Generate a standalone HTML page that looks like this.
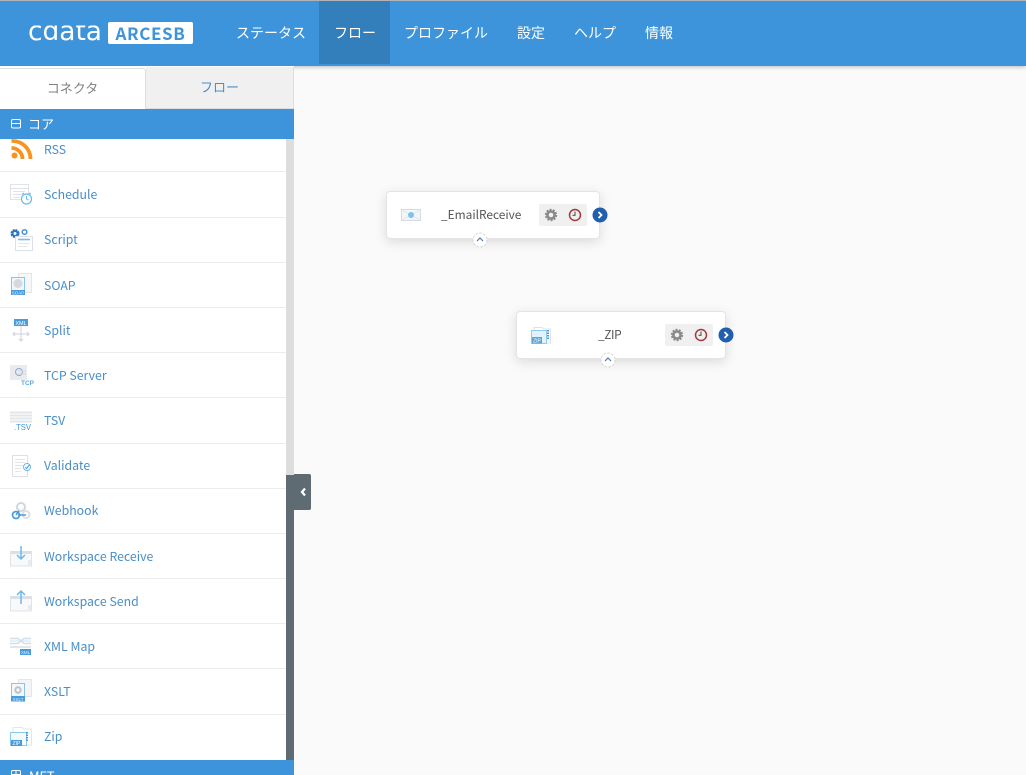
<!DOCTYPE html>
<html lang="ja"><head><meta charset="utf-8"><title>ArcESB</title>
<style>
html,body{margin:0;padding:0;width:1026px;height:775px;overflow:hidden;background:#fafafa;font-family:"Noto Sans CJK JP","Liberation Sans",sans-serif}
div,span{position:absolute;box-sizing:border-box}
#top{left:0;top:0;width:1026px;height:66px;background:#3e94da;border-top:1px solid #b0b4b8;box-shadow:0 1px 4px rgba(0,0,0,.25)}
#act{left:319px;top:1px;width:71px;height:63px;background:#337fbb}
.n{top:23px;height:20px;line-height:20px;font-size:14px;color:#fff;white-space:nowrap}
#badge{left:108px;top:22px;width:85px;height:22px;background:#fff;border-radius:2px;color:#3e94da;font:700 17px/22px "Noto Sans CJK JP",sans-serif;text-align:center;letter-spacing:.6px}
#side{left:0;top:66px;width:294px;height:709px;background:#fff}
#t1{left:0;top:68px;width:146px;height:42px;background:#fff;border:1px solid #ddd;border-bottom:0;border-left:0;border-radius:0 3px 0 0;text-align:center;line-height:38px;font-size:13px;color:#808080}
#t2{left:146px;top:67px;width:148px;height:42px;background:#f0f0f0;border-right:1px solid #ddd;border-bottom:1px solid #ddd;text-align:center;line-height:40px;font-size:13px;color:#4a8ec8}
.h{left:0;width:294px;background:#3e94da;color:#fff;font-size:13px;overflow:hidden}
.r{left:44px;height:20px;line-height:20px;font-size:12.3px;color:#4a8ec8;white-space:nowrap}
.l{left:0;width:286px;height:1px;background:#ececec}
#sb1{left:286px;top:139px;width:8px;height:336px;background:#ddd}
#sb2{left:286px;top:475px;width:8px;height:285px;background:#5f6b73}
#hd{left:294px;top:474px;width:17px;height:36px;background:#5f6b73;border-radius:0 2px 2px 0}
.node{background:#fff;border:1px solid #e4e4e4;border-radius:4px;box-shadow:0 3px 12px rgba(0,0,0,.13);height:48px}
.nt{height:20px;line-height:20px;font-size:11.9px;color:#555;white-space:nowrap}
.box{width:48px;height:22px;background:#f0f0f0;border-radius:2px}
svg{position:absolute;overflow:visible}
svg text{font-family:"Liberation Sans",sans-serif}
</style></head><body>

<div id="top"></div>
<div id="act"></div>
<svg style="left:0;top:0" width="110" height="66"><defs><clipPath id="lc"><rect x="20" y="25.500" width="90" height="20"/></clipPath></defs><text x="28" y="40" style="font-family:'DejaVu Sans',sans-serif" font-size="27" fill="#fff" textLength="74" lengthAdjust="spacingAndGlyphs" clip-path="url(#lc)">cdata</text></svg>
<div id="badge">ARCESB</div>
<span class="n" style="left:236px">ステータス</span>
<span class="n" style="left:334px">フロー</span>
<span class="n" style="left:404px">プロファイル</span>
<span class="n" style="left:517px">設定</span>
<span class="n" style="left:574px">ヘルプ</span>
<span class="n" style="left:645px">情報</span>

<div id="side"></div>
<div id="t2">フロー</div>
<div id="t1">コネクタ</div>

<div class="r" style="top:139px">RSS</div>
<div class="r" style="top:184px">Schedule</div>
<div class="r" style="top:229px">Script</div>
<div class="r" style="top:275px">SOAP</div>
<div class="r" style="top:320px">Split</div>
<div class="r" style="top:365px">TCP Server</div>
<div class="r" style="top:410px">TSV</div>
<div class="r" style="top:455px">Validate</div>
<div class="r" style="top:500px">Webhook</div>
<div class="r" style="top:546px">Workspace Receive</div>
<div class="r" style="top:591px">Workspace Send</div>
<div class="r" style="top:636px">XML Map</div>
<div class="r" style="top:681px">XSLT</div>
<div class="r" style="top:726px">Zip</div>

<div class="l" style="top:171px"></div><div class="l" style="top:217px"></div><div class="l" style="top:262px"></div><div class="l" style="top:307px"></div><div class="l" style="top:352px"></div><div class="l" style="top:397px"></div><div class="l" style="top:443px"></div><div class="l" style="top:488px"></div><div class="l" style="top:533px"></div><div class="l" style="top:578px"></div><div class="l" style="top:623px"></div><div class="l" style="top:668px"></div><div class="l" style="top:714px"></div>

<svg style="left:0;top:0" width="294" height="775" fill="none">
<!-- RSS -->
<g stroke="#f7931e" stroke-width="3.800"><path d="M11.500 141a18 18 0 0 1 19 18"/><path d="M11.500 148a11 11 0 0 1 11 11"/></g><circle cx="14.500" cy="155.500" r="3" fill="#f7931e"/>
<!-- Schedule -->
<g stroke="#dfe3e9"><rect x="10.500" y="184.500" width="18" height="15"/><path d="M10.500 188.500h18"/><path d="M13 191.500h12M13 194.500h9M13 197.500h7"/></g>
<circle cx="26.500" cy="199" r="5" fill="#fff" stroke="#6db8ea" stroke-width="1.200"/><path d="M26.500 196v3l2 1M22 194l2-1M31 194l-2-1" stroke="#6db8ea"/>
<!-- Script -->
<circle cx="15" cy="233.500" r="3.500" fill="#2a76bb" stroke="#2a76bb" stroke-width="2" stroke-dasharray="2 .8"/><circle cx="15" cy="233.500" r="1.500" fill="#fff"/><circle cx="24.500" cy="232" r="2.300" stroke="#3e94da" stroke-width="1.500"/>
<rect x="15.500" y="236.500" width="17" height="14" fill="#fff" stroke="#dde1e6"/><path d="M18 239.500h12" stroke="#7fbce8" stroke-width="1.600"/><path d="M18 243.500h12M18 246.500h9" stroke="#e3e6ea"/>
<!-- SOAP -->
<rect x="18.500" y="273.500" width="13" height="19" stroke="#e4e6ea" fill="#f7f7f7"/><rect x="11.500" y="277.500" width="13" height="17" fill="#f0f6fb" stroke="#8ac3ec"/><circle cx="18" cy="283.500" r="4.500" fill="#d5d9de"/><rect x="11" y="290" width="14" height="5" fill="#4a9bdc"/><text x="18" y="294.500" font-size="4.500" fill="#dcefff" text-anchor="middle">SOAP</text>
<!-- Split -->
<rect x="14" y="319" width="14" height="7" fill="#4a9bdc"/><text x="21" y="325" font-size="5.500" fill="#fff" text-anchor="middle">XML</text>
<path d="M21 326v15M13 334h16M15 332l-2 2 2 2M27 332l2 2-2 2M19 339l2 2 2-2" stroke="#cdd2da"/>
<!-- TCP -->
<rect x="10" y="365" width="17" height="15" fill="#e9ebef"/><circle cx="19" cy="372" r="3.500" stroke="#8eaccb"/><path d="M18 371h8M18 374h8" stroke="#d5d9df"/>
<text x="21" y="385" font-size="6.500" font-weight="700" fill="#5aa5e0">TCP</text>
<!-- TSV -->
<path d="M10 412.500h22M10 415.500h22M10 418.500h22M10 421.500h22" stroke="#e3e5e9" stroke-width="2"/>
<text x="14" y="430" font-size="8" fill="#3e94da" textLength="17" lengthAdjust="spacingAndGlyphs">.TSV</text>
<!-- Validate -->
<rect x="12.500" y="455.500" width="15" height="21" stroke="#dde0e5" fill="#fff"/><path d="M15 459.500h10M15 462.500h10M15 465.500h8M15 468.500h6M15 471.500h6" stroke="#e3e5e9"/><circle cx="27" cy="467" r="3.500" fill="#fff" stroke="#6db8ea"/><path d="M25.500 467l1 1.500 3-3.500" stroke="#4a9bdc"/>
<!-- Webhook -->
<circle cx="21" cy="507" r="4" stroke="#d2d6dc" stroke-width="2"/><circle cx="26" cy="514.500" r="3.500" stroke="#dcdfe4" stroke-width="2"/><path d="M19 511l-3 4" stroke="#4a9bdc" stroke-width="1.500"/><circle cx="16" cy="515" r="3.500" stroke="#4a9bdc" stroke-width="1.700"/><path d="M18 515h8" stroke="#4a9bdc" stroke-width="1.500"/>
<!-- Workspace Receive -->
<rect x="10.500" y="551.500" width="21" height="14.500" fill="#f8f9fa" stroke="#e0e3e8"/><rect x="11" y="551" width="20" height="3" fill="#dcdfe4"/><rect x="28" y="560" width="3" height="5" fill="#e8eaee"/>
<path d="M21 546v13M17 555l4 4 4-4" stroke="#6db8ea" stroke-width="1.500"/>
<!-- Workspace Send -->
<rect x="10.500" y="596.500" width="21" height="14.500" fill="#f8f9fa" stroke="#e0e3e8"/><rect x="11" y="596" width="20" height="3" fill="#dcdfe4"/><rect x="28" y="605" width="3" height="5" fill="#e8eaee"/>
<path d="M21 604v-13M17 595l4-4 4 4" stroke="#6db8ea" stroke-width="1.500"/>
<!-- XML Map -->
<path d="M10 638.500h8l6 5h7M10 643.500h8l6-5h7M10 647h21" stroke="#d5dde5" stroke-width="1.400"/><path d="M10 641h21" stroke="#c9e5f7"/><rect x="20" y="649" width="11" height="6" fill="#4a9bdc"/><text x="25.500" y="654" font-size="4.500" fill="#dcefff" text-anchor="middle">XML</text>
<!-- XSLT -->
<rect x="18.500" y="679.500" width="13" height="17" fill="#f5f5f5" stroke="#e4e6ea"/><rect x="11.500" y="683.500" width="13" height="17" fill="#f3f8fc" stroke="#8ac3ec"/><circle cx="18" cy="690" r="2.700" stroke="#bcc1c9" stroke-width="2"/><rect x="11" y="696" width="14" height="5.500" fill="#4a9bdc"/><text x="18" y="701" font-size="4.500" fill="#dcefff" text-anchor="middle">XSLT</text>
<!-- Zip -->
<path d="M13 727.500h9l2 1.500h7.500v16H13z" fill="#fff" stroke="#e3e6ea"/><path d="M10.500 732.500h16v13h-16z" fill="#f6fafd" stroke="#8ac9ef"/><rect x="11" y="740" width="11" height="6" fill="#4a9bdc"/><text x="16.500" y="745" font-size="5" fill="#fff" text-anchor="middle">ZIP</text><path d="M27 732v9" stroke="#4a9bdc" stroke-width="2" stroke-dasharray="1.500 1"/>
</svg>

<div class="h" style="top:109px;height:30px"><svg style="left:11px;top:10px" width="10" height="10" fill="none" stroke="#fff"><rect x=".5" y=".5" width="9" height="8.500" rx="1.500"/><path d="M.5 4.500h9"/></svg><span style="left:28px;top:5px;line-height:20px">コア</span></div>
<div class="h" style="top:760px;height:15px"><svg style="left:11px;top:10px" width="10" height="10" fill="none" stroke="#fff"><rect x=".5" y=".5" width="9" height="8.500" rx="1.500"/><path d="M.5 4.500h9M5 .5v8"/></svg><span style="left:29px;top:6px;line-height:20px">MFT</span></div>

<div id="sb1"></div><div id="sb2"></div>
<div id="hd"><svg style="left:0;top:0" width="17" height="36" fill="none"><path d="M11 14.500l-3 3.500 3 3.500" stroke="#fff" stroke-width="2.200"/></svg></div>

<!-- Node 1 -->
<div class="node" style="left:386px;top:191px;width:214px"></div>
<svg style="left:401px;top:208px" width="20" height="14" fill="none"><rect x=".5" y="1.500" width="19" height="11" fill="#f2f6fa" stroke="#d5dbe3"/><path d="M1 2l9 5 9-5M1 12l9-5 9 5" stroke="#e3e7ec"/><circle cx="10" cy="7" r="3" fill="#7fc0ec"/></svg>
<span class="nt" style="left:441px;top:205px">_EmailReceive</span>
<div class="box" style="left:539px;top:204px"></div>
<svg style="left:544px;top:208px" width="14" height="14" fill="none"><circle cx="7" cy="7" r="3.600" stroke="#8a8a8a" stroke-width="2.600"/><circle cx="7" cy="7" r="5.400" stroke="#8a8a8a" stroke-width="1.600" stroke-dasharray="2 1.400"/></svg>
<svg style="left:568px;top:208px" width="14" height="14" fill="none"><circle cx="7" cy="7" r="5.500" stroke="#a33a3a" stroke-width="1.500"/><path d="M7 3.500v3.800H4.500" stroke="#555" stroke-width="1.100"/></svg>
<svg style="left:592px;top:207px" width="16" height="16" fill="none"><circle cx="8" cy="8" r="7.500" fill="#1f5fae"/><path d="M6.500 5l3 3-3 3" stroke="#fff" stroke-width="1.800"/></svg>
<svg style="left:472px;top:232px" width="16" height="16" fill="none"><circle cx="8" cy="8" r="7" fill="#fff" stroke="#d5d5d5" stroke-dasharray="2.500 1.500"/><path d="M5 9l3-3 3 3" stroke="#5078b8" stroke-width="1.200"/></svg>

<!-- Node 2 -->
<div class="node" style="left:516px;top:311px;width:210px"></div>
<svg style="left:531px;top:326px" width="20" height="19" fill="none"><path d="M3 1.500h8l2 1.500h6.500v14H3z" fill="#fff" stroke="#dfe3e8"/><path d="M.5 4.500h15v13H.5z" fill="#e3f1fb" stroke="#8ccaf0"/><rect x="1" y="11" width="10" height="6.500" fill="#5aa5e0"/><text x="6" y="16.500" font-size="5" fill="#fff" text-anchor="middle">ZIP</text><path d="M17 4v9" stroke="#4a9bdc" stroke-width="2" stroke-dasharray="1.500 1"/></svg>
<span class="nt" style="left:598px;top:325px;letter-spacing:-.4px">_ZIP</span>
<div class="box" style="left:665px;top:324px"></div>
<svg style="left:670px;top:328px" width="14" height="14" fill="none"><circle cx="7" cy="7" r="3.600" stroke="#8a8a8a" stroke-width="2.600"/><circle cx="7" cy="7" r="5.400" stroke="#8a8a8a" stroke-width="1.600" stroke-dasharray="2 1.400"/></svg>
<svg style="left:694px;top:328px" width="14" height="14" fill="none"><circle cx="7" cy="7" r="5.500" stroke="#a33a3a" stroke-width="1.500"/><path d="M7 3.500v3.800H4.500" stroke="#555" stroke-width="1.100"/></svg>
<svg style="left:718px;top:327px" width="16" height="16" fill="none"><circle cx="8" cy="8" r="7.500" fill="#1f5fae"/><path d="M6.500 5l3 3-3 3" stroke="#fff" stroke-width="1.800"/></svg>
<svg style="left:600px;top:352px" width="16" height="16" fill="none"><circle cx="8" cy="8" r="7" fill="#fff" stroke="#d5d5d5" stroke-dasharray="2.500 1.500"/><path d="M5 9l3-3 3 3" stroke="#5078b8" stroke-width="1.200"/></svg>
</body></html>
